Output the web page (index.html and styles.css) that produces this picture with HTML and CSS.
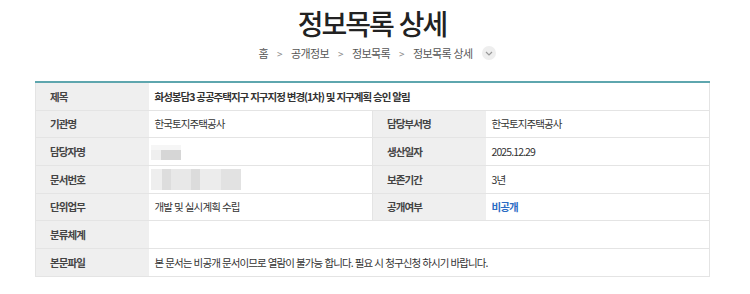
FILE: index.html
```html
<!DOCTYPE html>
<html lang="ko">
<head>
    <meta charset="UTF-8">
    <meta name="viewport" content="width=device-width, initial-scale=1.0">
    <title>정보목록 상세</title>
    <link rel="stylesheet" href="styles.css">
</head>
<body>
    <div class="page">
        <h1 class="page-title">정보목록 상세</h1>
        <div class="breadcrumb">
            <span>홈</span>
            <span class="sep">&gt;</span>
            <span>공개정보</span>
            <span class="sep">&gt;</span>
            <span>정보목록</span>
            <span class="sep">&gt;</span>
            <span>정보목록 상세</span>
            <span class="more">
                <svg width="8" height="5" viewBox="0 0 8 5"><path d="M1 1l3 3 3-3" fill="none" stroke="#999" stroke-width="1.2"/></svg>
            </span>
        </div>

        <table class="detail">
            <colgroup>
                <col class="c-label">
                <col class="c-value">
                <col class="c-label">
                <col class="c-value">
            </colgroup>
            <tr>
                <th>제목</th>
                <td colspan="3" class="subject">화성봉담3 공공주택지구 지구지정 변경(1차) 및 지구계획 승인 알림</td>
            </tr>
            <tr>
                <th>기관명</th>
                <td>한국토지주택공사</td>
                <th>담당부서명</th>
                <td>한국토지주택공사</td>
            </tr>
            <tr>
                <th>담당자명</th>
                <td><span class="blur short"></span></td>
                <th>생산일자</th>
                <td>2025.12.29</td>
            </tr>
            <tr>
                <th>문서번호</th>
                <td><span class="blur long"></span></td>
                <th>보존기간</th>
                <td>3년</td>
            </tr>
            <tr>
                <th>단위업무</th>
                <td>개발 및 실시계획 수립</td>
                <th>공개여부</th>
                <td class="closed">비공개</td>
            </tr>
            <tr>
                <th>분류체계</th>
                <td colspan="3"></td>
            </tr>
            <tr>
                <th>본문파일</th>
                <td colspan="3">본 문서는 비공개 문서이므로 열람이 불가능 합니다. 필요 시 청구신청 하시기 바랍니다.</td>
            </tr>
        </table>
    </div>
</body>
</html>
```

FILE: styles.css
```css
body {
    margin: 0;
    background: #fff;
    font-family: "Noto Sans CJK KR", "Noto Sans", sans-serif;
    color: #333;
}
.page {
    width: 674px;
    margin-left: 35px;
    padding-top: 6px;
}
.page-title {
    margin: 0;
    text-align: center;
    font-size: 28px;
    font-weight: 500;
    line-height: 34px;
    color: #222;
    letter-spacing: -2px;
}
.breadcrumb {
    display: flex;
    justify-content: center;
    align-items: center;
    gap: 8px;
    height: 26px;
    font-size: 11px;
    letter-spacing: -0.6px;
    color: #555;
    padding-left: 10px;
}
.breadcrumb .sep {
    color: #888;
    font-size: 10px;
    margin: 0 1px;
}
.breadcrumb .more {
    display: flex;
    align-items: center;
    justify-content: center;
    width: 14px;
    height: 14px;
    border-radius: 50%;
    background: #eee;
    margin-left: 1px;
}
.detail {
    width: 674px;
    margin-top: 15px;
    border-collapse: collapse;
    table-layout: fixed;
    font-size: 10.5px;
    letter-spacing: -0.9px;
    border-top: 2px solid #5ea6ae;
}
.c-label {
    width: 113px;
}
.c-value {
    width: 224px;
}
.detail th,
.detail td {
    height: 26.67px;
    padding: 0 6px;
    border-bottom: 1px solid #e4e4e4;
    text-align: left;
    vertical-align: middle;
}
.detail th {
    padding-left: 14px;
    background: #efefef;
    font-weight: 700;
    color: #444;
    border-left: 1px solid #e4e4e4;
}
.detail td {
    color: #333;
}
.detail td:last-child {
    border-right: 1px solid #e4e4e4;
}
.detail td.subject {
    font-weight: 700;
    color: #333;
    letter-spacing: -1px;
}
.detail td.closed {
    color: #2b6cc4;
    font-weight: 700;
}
.blur {
    display: inline-block;
    vertical-align: middle;
    margin-left: -4px;
}
.blur.short {
    width: 30px;
    height: 15px;
    background:
        linear-gradient(#f6f6f6, #f6f6f6) 0 0 / 100% 5px no-repeat,
        linear-gradient(90deg, #efefef 0 33%, #d6d6d6 33% 100%);
}
.blur.long {
    width: 90px;
    height: 21px;
    background: linear-gradient(90deg, #eeeeee 0 12%, #dddddd 12% 22%, #e8e8e8 22% 44%, #dcdcdc 44% 55%, #ececec 55% 78%, #e2e2e2 78% 100%);
}
```
